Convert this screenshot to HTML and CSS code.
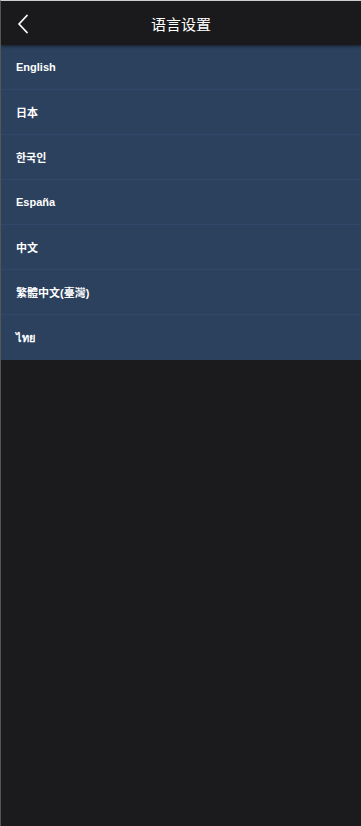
FILE: index.html
```html
<!DOCTYPE html>
<html lang="zh">
<head>
<meta charset="utf-8">
<title>语言设置</title>
<link rel="stylesheet" href="styles.css">
</head>
<body>
<div class="page">
  <header class="topbar">
    <span class="back">
      <svg width="12" height="20" viewBox="0 0 12 20"><path d="M10 1.5 L2 10 L10 18.5" fill="none" stroke="#ffffff" stroke-width="1.8" stroke-linecap="round" stroke-linejoin="round"/></svg>
    </span>
    <h1 class="title">语言设置</h1>
  </header>
  <ul class="langs">
    <li class="lang">English</li>
    <li class="lang">日本</li>
    <li class="lang">한국인</li>
    <li class="lang">España</li>
    <li class="lang">中文</li>
    <li class="lang">繁體中文(臺灣)</li>
    <li class="lang">ไทย</li>
  </ul>
</div>
</body>
</html>
```
FILE: styles.css
```css
html, body {
  margin: 0;
  padding: 0;
  height: 100%;
}
body {
  background: #1b1b1d;
  font-family: "Liberation Sans", Arial, "Noto Sans CJK SC", sans-serif;
  color: #ffffff;
  box-sizing: border-box;
  border-top: 1px solid #cfcfcf;
  border-left: 1px solid #555555;
}
.page {
  display: flex;
  flex-direction: column;
}
.topbar {
  position: relative;
  height: 44px;
  background: #1a1a1c;
  display: flex;
  align-items: center;
  justify-content: center;
  box-shadow: 0 1px 3px rgba(0,0,0,0.6);
  z-index: 1;
}
.back {
  position: absolute;
  left: 16px;
  top: 13px;
  width: 12px;
  height: 20px;
  display: block;
}
.back svg { display: block; }
.title {
  margin: 0;
  font-size: 15px;
  font-weight: normal;
  font-family: "Noto Sans CJK SC", sans-serif;
  letter-spacing: 0;
}
.langs {
  list-style: none;
  margin: 0;
  padding: 0;
  background: #2c415e;
}
.lang {
  height: 45px;
  box-sizing: border-box;
  display: flex;
  align-items: center;
  padding-left: 15px;
  font-size: 11px;
  font-weight: bold;
  border-bottom: 1px solid #32486a;
  font-family: "Liberation Sans", Arial, "Noto Sans CJK SC", "Noto Sans CJK KR", sans-serif;
}
.lang:last-child { border-bottom: none; }
```
